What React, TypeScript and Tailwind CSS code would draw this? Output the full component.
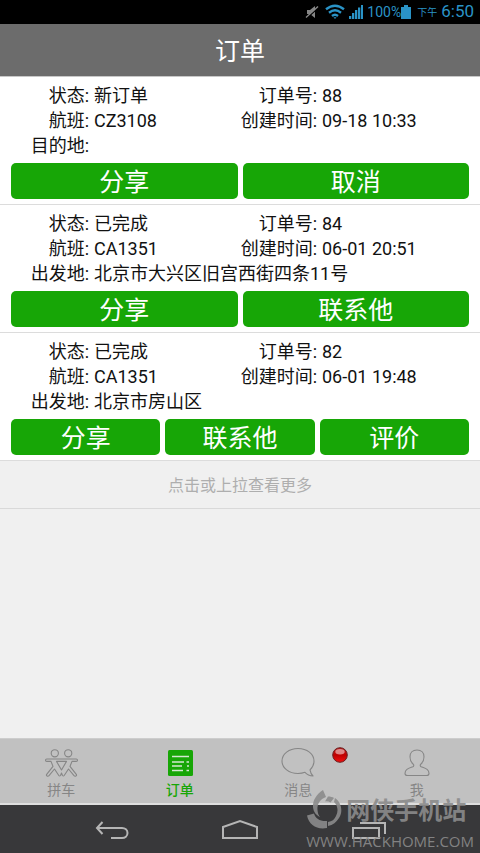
import React from 'react';
import clsx from 'clsx';

interface Order {
  id: number;
  status: string;
  flight: string;
  createdAt: string;
  placeLabel: string;
  place: string;
  actions: string[];
}

const orders: Order[] = [
  {
    id: 88,
    status: '新订单',
    flight: 'CZ3108',
    createdAt: '09-18 10:33',
    placeLabel: '目的地',
    place: '',
    actions: ['分享', '取消'],
  },
  {
    id: 84,
    status: '已完成',
    flight: 'CA1351',
    createdAt: '06-01 20:51',
    placeLabel: '出发地',
    place: '北京市大兴区旧宫西街四条11号',
    actions: ['分享', '联系他'],
  },
  {
    id: 82,
    status: '已完成',
    flight: 'CA1351',
    createdAt: '06-01 19:48',
    placeLabel: '出发地',
    place: '北京市房山区',
    actions: ['分享', '联系他', '评价'],
  },
];

const StatusBar = () => (
  <div className="flex h-6 shrink-0 items-center justify-end bg-black pr-1.5 text-[#2a93c6]">
    <svg className="mr-1.5 h-4 w-3.5" viewBox="0 0 14 16" fill="none">
      <path d="M2 6h3l5-4v12l-5-4H2z" fill="#858585" />
      <path d="M1.500 14.500 13.500 3.500" stroke="#000" strokeWidth="1.500" />
      <path d="M1 13.500 13 2.500" stroke="#8a8a8a" strokeWidth="1.300" />
    </svg>
    <svg className="mr-1 h-4 w-5" viewBox="0 0 20 16" fill="none" stroke="currentColor" strokeWidth="2.4">
      <path d="M1 5.2Q10-1.8 19 5.2" />
      <path d="M4 8.7Q10 4 16 8.7" />
      <path d="M7 12Q10 9.5 13 12" />
      <path d="M8.5 13.2h3L10 15z" fill="currentColor" stroke="none" />
    </svg>
    <svg className="mr-1 h-4 w-3.5" viewBox="0 0 14 16" fill="currentColor">
      <path d="M0 12h2.300v3H0zM3 9h2.300v6H3zM6 6h2.300v9H6zM9 3.500h2.300V15H9zM12 1h2v14h-2z" />
    </svg>
    <span className="text-sm">100%</span>
    <svg className="mr-1.5 h-4 w-2.5" viewBox="0 0 10 16" fill="currentColor">
      <path d="M3 1h4v2h3v12H0V3h3z" />
    </svg>
    <span className="mr-1 text-[10px]">下午</span>
    <span className="text-[17px]">6:50</span>
  </div>
);

const Field = ({ label, value, wide }: { label: string; value: string | number; wide?: boolean }) => (
  <div className="flex">
    <dt className={clsx('shrink-0 text-right', wide ? 'w-[77px]' : 'w-[89px]')}>{label}:</dt>
    <dd className="ml-[5px]">{value}</dd>
  </div>
);

const OrderItem = ({ order }: { order: Order }) => (
  <li className="border-b border-[#dcdcdc] bg-white pt-1.5 pb-[5px]">
    <dl className="grid grid-cols-2 text-lg leading-[25px] text-[#111]">
      <Field label="状态" value={order.status} />
      <Field label="订单号" value={order.id} wide />
      <Field label="航班" value={order.flight} />
      <Field label="创建时间" value={order.createdAt} wide />
      <div className="col-span-2">
        <Field label={order.placeLabel} value={order.place} />
      </div>
    </dl>
    <div className="mt-[5px] flex gap-[5px] px-[11px]">
      {order.actions.map((action) => (
        <button
          key={action}
          type="button"
          className="h-9 flex-1 rounded-[5px] bg-[#17a606] pt-1 text-[25px] leading-8 text-white"
        >
          {action}
        </button>
      ))}
    </div>
  </li>
);

const CarpoolIcon = () => (
  <svg className="h-8 w-9" viewBox="0 0 36 32" fill="none" stroke="currentColor" strokeWidth="1.1" strokeLinejoin="round">
    <circle cx="11.8" cy="6.3" r="3.6" />
    <circle cx="25.2" cy="6.3" r="3.6" />
    <path d="M3.8 12h29.400q1.300 0 1.300 1.200t-1.300 1.200H29l-2 5 6.300 8q.7 1.200-.4 1.700t-1.900-.4L25.500 22l-4.300 6.500q-.8 1-1.700 0L18.500 26l-1 2.500q-.9 1-1.700 0L11.500 22 6 28.700q-.8.9-1.900.4t-.4-1.700l6.300-8-2-5H3.800q-1.300 0-1.300-1.200T3.800 12z" />
    <path d="M13.500 14.400h10L18.500 23z" />
  </svg>
);

const OrdersIcon = () => (
  <svg className="h-8 w-9" viewBox="0 0 36 32">
    <rect x="6" y="3" width="25" height="26" rx="1.5" fill="#17a606" />
    <path
      d="M10 9.5h17M10 15h12M24.500 15h2.500M10 19h10M25 19h2M10 23.500h11M24.500 23.500h2.500"
      stroke="#d3e8d0"
      strokeWidth="1.6"
    />
  </svg>
);

const MessageIcon = () => (
  <svg className="h-8 w-9" viewBox="0 0 36 32" fill="none" stroke="currentColor" strokeWidth="1.1" strokeLinejoin="round">
    <path d="M18 1.5C9 1.5 2 7 2 14s7 12.5 16 12.5c2.800 0 5-.4 7-1.200 2 2.200 4.800 3.500 8 3.700-1.500-1.600-2.600-3.600-3-6.200 2.600-2.300 4-5.400 4-8.800 0-7-7-12.500-16-12.500z" />
  </svg>
);

const ProfileIcon = () => (
  <svg className="h-8 w-9" viewBox="0 0 36 32" fill="none" stroke="currentColor" strokeWidth="1.1" strokeLinejoin="round">
    <path d="M18 3c-4.500 0-7 3-7 6.800 0 3.200 1.300 5.800 3.300 7.400.8.8.5 2-.5 2.500C10 21.200 6 22 6 26.500 6 28 7 28.500 8.500 28.500h19c1.500 0 2.500-.5 2.500-2 0-4.500-4-5.300-7.800-6.800-1-.5-1.300-1.700-.5-2.500 2-1.600 3.300-4.200 3.300-7.400C25 6 22.500 3 18 3z" />
  </svg>
);

const tabs = [
  { label: '拼车', icon: <CarpoolIcon /> },
  { label: '订单', icon: <OrdersIcon />, active: true },
  { label: '消息', icon: <MessageIcon />, unread: true },
  { label: '我', icon: <ProfileIcon /> },
];

const TabBar = () => (
  <nav className="grid h-[67px] shrink-0 grid-cols-4 border-t border-b-2 border-t-[#cdcdcd] border-b-[#dedede] bg-[#c1c1c1] pr-1 pl-0.5">
    {tabs.map((tab) => (
      <button
        key={tab.label}
        type="button"
        className={clsx(
          'relative flex flex-col items-center pt-2 text-sm leading-5',
          tab.active ? 'font-medium text-[#17a606]' : 'text-[#868686]'
        )}
      >
        {tab.icon}
        <span className="mt-px">{tab.label}</span>
        {tab.unread && (
          <svg className="absolute top-2 right-2.5 size-4" viewBox="0 0 16 16">
            <defs>
              <linearGradient id="unread" x1="0" y1="0" x2="0" y2="1">
                <stop offset="0" stopColor="#b81c1c" />
                <stop offset="0.5" stopColor="#c00000" />
                <stop offset="1" stopColor="#f01010" />
              </linearGradient>
            </defs>
            <circle cx="8" cy="8" r="7.3" fill="url(#unread)" stroke="#6b2020" />
            <ellipse cx="8" cy="4.7" rx="4.7" ry="2.7" fill="#fff" opacity="0.5" />
          </svg>
        )}
      </button>
    ))}
  </nav>
);

const SystemNav = () => (
  <div className="flex h-12 shrink-0 items-center justify-center gap-[92px] bg-[#38383a] text-[#b5b5b5]">
    <button type="button" aria-label="返回">
      <svg className="h-6 w-9" viewBox="0 0 36 24" fill="none" stroke="currentColor" strokeWidth="2">
        <path d="M8.5 5 3 11l5.500 6M3 11h25c3 0 5.500 2 5.500 5s-2.500 5-5.500 5H17" />
      </svg>
    </button>
    <button type="button" aria-label="主页">
      <svg className="h-6 w-9" viewBox="0 0 36 24" fill="none" stroke="currentColor" strokeWidth="2">
        <path d="M1 21V10l17-6 17 6v11z" />
      </svg>
    </button>
    <button type="button" aria-label="最近任务">
      <svg className="h-6 w-9" viewBox="0 0 36 24" fill="none" stroke="currentColor" strokeWidth="2">
        <path d="M3 11h26v10H3zM10 6h25v11" />
      </svg>
    </button>
  </div>
);

const Watermark = () => (
  <div className="pointer-events-none absolute right-1.5 bottom-0 text-[#8b8b8b] opacity-90">
    <div className="flex h-10 items-center">
      <svg className="mr-1 h-10 w-9" viewBox="0 0 36 40" fill="currentColor">
        <path d="M17 1l3 7c-6 2-9 7-8.500 13 .2 3 1 5 2.500 7-4-2-6.500-5-7-10C6.500 11 11 5 17 1z" />
        <path d="M1 26.500l7-2c1.500 5 6 8 13 7.500V39C11 41 3 36 1 26.500z" />
        <path d="M29 9c7 5 8 14 4 20-2.500 4-6 7-11 8v-4c4-.5 6.500-2.500 8-6 2.500-5 2-10-2-14z" />
        <path d="M22 7.500c2.500 0 4.500.5 6 1.500l-3.500 4.500C23 12.500 21 12 19 12.500z" />
      </svg>
      <span className="pt-1 text-2xl leading-6 font-bold">网侠手机站</span>
    </div>
    <div className="font-['Open_Sans','Noto_Sans_CJK_SC',sans-serif] text-[15px] leading-6">WWW.HACKHOME.COM</div>
  </div>
);

export default function App() {
  return (
    <div className="relative flex h-screen flex-col bg-[#f0f0f0] font-[Roboto,'Noto_Sans_CJK_SC',sans-serif]">
      <StatusBar />
      <header className="flex h-[53px] shrink-0 items-center justify-center border-b border-[#c8c8c8] bg-[#6c6c6c]">
        <h1 className="pt-1 text-[25px] leading-8 text-white">订单</h1>
      </header>
      <main className="min-h-0 flex-1 overflow-hidden">
        <ul>
          {orders.map((order) => (
            <OrderItem key={order.id} order={order} />
          ))}
        </ul>
        <button type="button" className="h-12 w-full border-b border-[#d9d9d9] pt-0.5 text-base text-[#aeaeae]">
          点击或上拉查看更多
        </button>
      </main>
      <TabBar />
      <SystemNav />
      <Watermark />
    </div>
  );
}
